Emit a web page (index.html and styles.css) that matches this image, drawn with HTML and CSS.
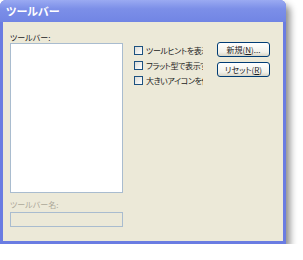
FILE: index.html
```html
<!DOCTYPE html>
<html>

<head>
    <meta charset="UTF-8">
    <title>ツールバー</title>
    <link rel="stylesheet" href="styles.css">
</head>

<body>
    <div class="window">
        <div class="title">ツールバー</div>
        <div class="body">
            <div class="left">
                <div class="label">ツールバー:</div>
                <div class="listbox"></div>
                <div class="label off name_label">ツールバー名:</div>
                <div class="textbox"></div>
            </div>
            <div class="checks">
                <div class="check"><span class="box"></span><span class="text">ツールヒントを表示</span></div>
                <div class="check"><span class="box"></span><span class="text">フラット型で表示する</span></div>
                <div class="check"><span class="box"></span><span class="text">大きいアイコンを使用</span></div>
            </div>
            <div class="buttons">
                <div class="btn">新規(<u>N</u>)...</div>
                <div class="btn">リセット(<u>R</u>)</div>
            </div>
        </div>
    </div>
</body>

</html>
```
FILE: styles.css
```css
* {
    box-sizing: border-box;
}

body {
    margin: 0;
    background: #fff;
    font-family: "Noto Sans CJK JP", "DejaVu Sans", sans-serif;
    font-size: 8px;
    font-feature-settings: "palt";
    color: #222;
}

.window {
    width: 286px;
    height: 244px;
    border-radius: 6px 6px 0 0;
    background: #6a7ce2;
    box-shadow: 4px 5px 7px rgba(0, 0, 0, 0.45);
    display: flex;
    flex-direction: column;
}

.title {
    height: 22px;
    line-height: 23px;
    padding-left: 6px;
    color: #fff;
    font-size: 11px;
    font-weight: bold;
    border-radius: 6px 6px 0 0;
    background: linear-gradient(#9aaaf2, #7c8fe8 40%, #7185e4);
}

.body {
    flex: 1;
    margin: 0 3px 3px 3px;
    background: #ece9d8;
    padding: 10px 0 0 7px;
    display: flex;
}

.left {
    width: 113px;
}

.label {
    height: 11px;
    line-height: 11px;
}

.off {
    color: #aca899;
}

.listbox {
    height: 150px;
    background: #fff;
    border: 1px solid #a9bccf;
}

.name_label {
    margin-top: 6px;
}

.textbox {
    margin-top: 2px;
    height: 15px;
    border: 1px solid #a9bccf;
    background: #ece9d8;
}

.checks {
    width: 69px;
    margin-left: 11px;
    margin-top: 11px;
    overflow: hidden;
}

.check {
    display: flex;
    align-items: center;
    height: 15px;
    white-space: nowrap;
    letter-spacing: -0.4px;
}

.check .box {
    flex: none;
    width: 9px;
    height: 9px;
    border: 1px solid #1c5180;
    background: linear-gradient(135deg, #dcdcd7, #fff);
    margin-right: 3px;
}

.buttons {
    margin-left: 14px;
    margin-top: 10px;
}

.btn {
    width: 53px;
    height: 15px;
    line-height: 13px;
    margin-bottom: 5px;
    text-align: center;
    border: 1px solid #003c74;
    border-radius: 3px;
    background: linear-gradient(#fff, #f2f1ea 70%, #d8d5c6);
}
```
